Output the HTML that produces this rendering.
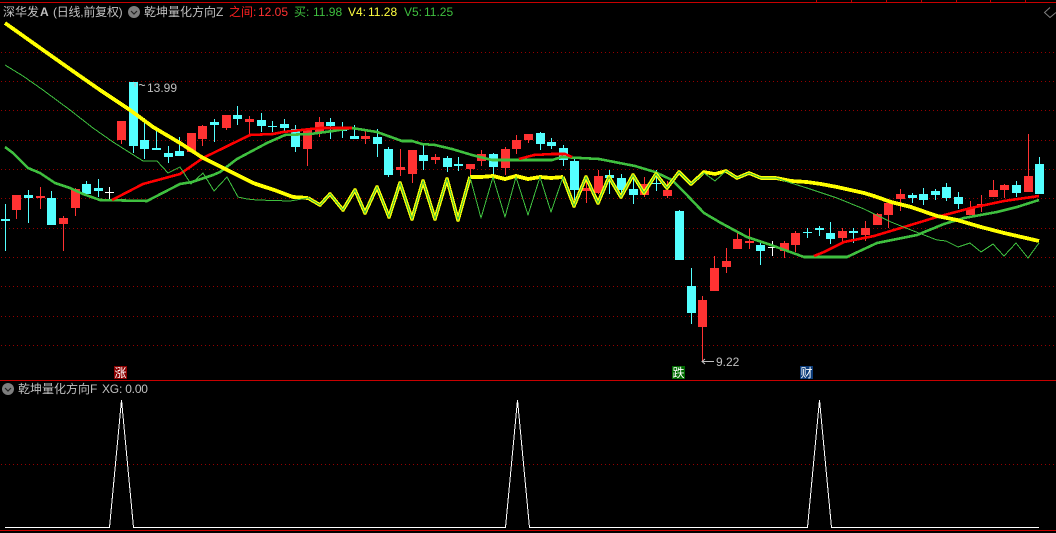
<!DOCTYPE html>
<html lang="zh"><head><meta charset="utf-8"><title>K线</title>
<style>
html,body{margin:0;padding:0;background:#000;width:1056px;height:533px;overflow:hidden}
#c{position:relative;width:1056px;height:533px;background:#000;overflow:hidden}
svg{position:absolute;left:0;top:0}
.t{position:absolute;white-space:pre;font:12px/14px "Liberation Sans","WenQuanYi Zen Hei","Noto Sans CJK SC",sans-serif;color:#c0c0c0}
.f{position:absolute;width:13px;height:13px;color:#fff;text-align:center;font:12px/13px "WenQuanYi Zen Hei","Noto Sans CJK SC",sans-serif}
</style></head><body><div id="c">
<svg width="1056" height="533" viewBox="0 0 1056 533">
<defs><pattern id="d" x="1" y="0" width="4" height="1" patternUnits="userSpaceOnUse"><rect width="1" height="1" fill="#960000"/></pattern></defs>
<g shape-rendering="crispEdges">
<g fill="url(#d)">
<rect x="0" y="52" width="1056" height="1"/><rect x="0" y="81" width="1056" height="1"/><rect x="0" y="110" width="1056" height="1"/><rect x="0" y="140" width="1056" height="1"/><rect x="0" y="169" width="1056" height="1"/><rect x="0" y="198" width="1056" height="1"/><rect x="0" y="228" width="1056" height="1"/><rect x="0" y="257" width="1056" height="1"/><rect x="0" y="286" width="1056" height="1"/><rect x="0" y="316" width="1056" height="1"/><rect x="0" y="345" width="1056" height="1"/><rect x="0" y="464" width="1056" height="1"/>
</g>
<path d="M0 2.5H1056M0 380.5H1056M0 530.5H1056" stroke="#c80000" stroke-width="1" fill="none"/>
<path d="M816.5 0V2M851.5 0V2M886.5 0V2M921.5 0V2M956.5 0V2M990.5 0V2M1025.5 0V2" stroke="#c00000" stroke-width="1" fill="none"/>
<!-- red candles -->
<path stroke="#ff3232" fill="none" d="M16.5 195V219M40.5 187V209M63.5 216V251M75.5 188V216M121.5 121V144M191.5 133V152M202.5 125V146M226.5 115V130M249.5 116V135M307.5 130V166M319.5 117V137M365.5 131V144M400.5 149V176M412.5 150V183M435.5 154V164M470.5 164V177M481.5 150V166M505.5 147V175M516.5 135V154M528.5 134V143M586.5 177V203M598.5 170V194M644.5 177V197M667.5 181V198M702.5 296V361M714.5 256V291M726.5 248V273M737.5 231V249M749.5 228V249M784.5 241V258M795.5 231V252M842.5 228V243M865.5 221V241M877.5 213V225M888.5 202V228M900.5 189V211M970.5 201V215M981.5 195V212M993.5 180V197M1004.5 184V198M1028.5 134V192"/>
<path fill="#ff3232" d="M12 195h9v15h-9zM36 196h9v2h-9zM59 218h9v6h-9zM71 189h9v19h-9zM117 121h9v19h-9zM187 133h9v19h-9zM198 126h9v13h-9zM222 115h9v13h-9zM245 119h9v3h-9zM303 130h9v19h-9zM315 122h9v10h-9zM361 136h9v3h-9zM396 167h9v3h-9zM408 150h9v24h-9zM431 157h9v3h-9zM466 164h9v5h-9zM477 154h9v7h-9zM501 149h9v19h-9zM512 140h9v9h-9zM524 134h9v6h-9zM582 188h9v3h-9zM594 176h9v17h-9zM640 184h9v11h-9zM663 190h9v6h-9zM698 300h9v27h-9zM710 268h9v23h-9zM722 261h9v6h-9zM733 239h9v10h-9zM745 241h9v2h-9zM780 243h9v8h-9zM791 233h9v12h-9zM838 231h9v7h-9zM861 228h9v7h-9zM873 214h9v11h-9zM884 203h9v12h-9zM896 194h9v5h-9zM966 208h9v7h-9zM977 204h9v2h-9zM989 190h9v7h-9zM1000 185h9v5h-9zM1024 176h9v16h-9z"/>
<!-- cyan candles -->
<path stroke="#54ffff" fill="none" d="M5.5 204V251M28.5 190V223M51.5 191V225M86.5 181V194M98.5 179V197M133.5 82V153M144.5 118V159M156.5 131V150M168.5 146V163M179.5 137V156M214.5 119V142M237.5 106V125M261.5 113V132M272.5 121V132M284.5 119V131M295.5 125V152M330.5 118V139M342.5 122V138M354.5 125V139M377.5 129V157M388.5 147V177M423.5 145V170M447.5 156V172M458.5 157V171M493.5 153V177M540.5 132V150M551.5 138V149M563.5 145V166M574.5 159V200M609.5 170V194M621.5 174V198M633.5 174V204M656.5 170V191M679.5 210V260M691.5 268V324M760.5 240V265M807.5 228V238M819.5 226V236M830.5 222V244M853.5 228V243M912.5 193V203M923.5 188V205M935.5 189V200M946.5 183V201M958.5 192V209M1016.5 181V197M1039.5 157V194"/>
<path fill="#54ffff" d="M1 219h9v2h-9zM24 195h9v3h-9zM47 198h9v27h-9zM82 184h9v10h-9zM94 188h9v3h-9zM129 82h9v64h-9zM140 140h9v9h-9zM152 148h9v2h-9zM164 153h9v4h-9zM175 151h9v5h-9zM210 122h9v3h-9zM233 115h9v4h-9zM257 120h9v6h-9zM268 126h9v1h-9zM280 124h9v4h-9zM291 129h9v18h-9zM326 122h9v4h-9zM338 129h9v2h-9zM350 136h9v3h-9zM373 137h9v7h-9zM384 149h9v26h-9zM419 155h9v6h-9zM443 158h9v9h-9zM454 164h9v2h-9zM489 154h9v13h-9zM536 133h9v11h-9zM547 142h9v4h-9zM559 148h9v12h-9zM570 161h9v29h-9zM605 175h9v3h-9zM617 178h9v12h-9zM629 189h9v6h-9zM652 183h9v1h-9zM675 211h9v49h-9zM687 286h9v27h-9zM756 245h9v6h-9zM803 232h9v1h-9zM815 228h9v2h-9zM826 233h9v6h-9zM849 231h9v2h-9zM908 195h9v3h-9zM919 194h9v6h-9zM931 191h9v4h-9zM942 187h9v11h-9zM954 197h9v7h-9zM1012 185h9v8h-9zM1035 164h9v30h-9z"/>
<!-- white candles -->
<path stroke="#fff" fill="none" d="M109.5 187V200M772.5 241V256"/>
<path fill="#fff" d="M105 192h9v1h-9zM768 247h9v1h-9z"/>
</g>
<g fill="none" stroke-linejoin="round" shape-rendering="crispEdges">
<!-- thick green -->
<polyline stroke="#3fbf3f" stroke-width="2.6" points="5,147 13,153 28,168 40,173 55,183 70,188 83,194 100,200 147,201 180,184 192,182 213,175 220,172 237,159 267,143 285,135 310,134 333,131 352,128 377,132 402,141 412,141 422,144 435,145 452,149 472,155 492,160 552,160 562,157 599,159 635,166 655,172 672,180 685,193 704,213 721,223 747,237 771,245 804,257 847,257 877,243 917,235 944,224 964,218 997,212 1017,207 1039,200"/>
<!-- red MA -->
<polyline stroke="#ff0000" stroke-width="2.6" points="112,200 143,184 180,174 203,158 250,135 273,134 283,132 320,128 352,128"/>
<polyline stroke="#ff0000" stroke-width="2.6" points="519,159 534,155 552,154 565,154 572,157"/>
<polyline stroke="#ff0000" stroke-width="2.6" points="814,256 824,252 844,242 874,236 904,227 937,217 971,208 1004,201 1039,196"/>
<!-- yellow -->
<polyline stroke="#ffff00" stroke-width="3.8" points="5,23 43,50 77,74 100,90 130,110 153,127 180,143 203,158 227,170 253,183 277,191 293,197 308,198"/>
<polyline stroke="#ffff00" stroke-width="3.6" points="308,198 320,205 330,194 343,210 355,190 365,213 377,187 389,217 400,183 412,219 423,181 435,219 447,179 458,220 470,177"/>
<polyline stroke="#ffff00" stroke-width="3.8" points="470,177 481,177 493,176 505,179 516,176 528,179 540,177 551,178 563,177"/>
<polyline stroke="#ffff00" stroke-width="3.6" points="563,177 574,206 586,177 598,203 609,177 621,197 633,175 644,193 656,174 667,188 679,172 691,184 704,172 715,174 726,171 737,178 749,173 761,178 776,178"/>
<polyline stroke="#ffff00" stroke-width="3.8" points="776,178 791,181 807,182 821,184 837,187 864,193 874,196 891,202 911,207 937,216 957,220 981,227 1004,233 1039,241"/>
<!-- thin green -->
<polyline stroke="#3fbf3f" stroke-width="1" points="5,65 23,76 43,90 70,110 93,128 113,142 143,161 157,161 168,173 180,167 191,184 203,173 214,191 227,177 238,197 247,199 257,200 290,201 308,198 320,205 330,194 343,210 355,190 365,213 377,187 389,217 400,183 412,219 423,181 435,219 447,179 458,220 470,177 481,218 493,177 505,217 516,177 528,215 540,177 551,212 563,177 574,206 586,177 598,203 609,177 621,197 633,175 644,193 656,174 667,188 679,172 691,184 704,173 715,181 726,171 737,178 749,173 761,178 776,178 791,183 807,188 837,198 864,209 891,222 911,230 937,240 946,241 958,247 970,243 981,252 993,244 1004,256 1016,243 1028,258 1039,243"/>
</g>
<!-- sub chart -->
<path fill="none" stroke="#fff" stroke-width="1" shape-rendering="crispEdges" d="M5 527.5H109.5L121.5 400L133.5 527.5H505.5L517.5 400L529.5 527.5H807.5L819.5 400L831.5 527.5H1039"/>
<!-- circle icons -->
<circle cx="134" cy="12" r="6" fill="#7e7e7e"/><path d="M131 11l3 3 3-3" stroke="#222" stroke-width="1.2" fill="none"/>
<circle cx="8" cy="389" r="6" fill="#7e7e7e"/><path d="M5 388l3 3 3-3" stroke="#222" stroke-width="1.2" fill="none"/>
<!-- diamond -->
<path d="M1050 7.5L1044.5 12.5L1050 17.5L1056 12.5" fill="none" stroke="#808080" stroke-width="1"/>
<!-- markers -->
<path d="M134 84h2M135 83v4M139 85q2-1 3 0t3 0" stroke="#c0c0c0" stroke-width="1" fill="none"/>
<path d="M702 361.5H714M705 359l-3 2.5 3 2.5" stroke="#c0c0c0" stroke-width="1" fill="none"/>
</svg>
<span class="t" style="left:3px;top:5px">深华发</span>
<span class="t" style="left:40px;top:5px;font-weight:bold">A</span>
<span class="t" style="left:53px;top:5px;letter-spacing:-.25px">(日线,前复权)</span>
<span class="t" style="left:144px;top:5px">乾坤量化方向Z</span>
<span class="t" style="left:229px;top:5px;color:#ff2020">之间:</span>
<span class="t" style="left:258px;top:5px;color:#ff3232">12.05</span>
<span class="t" style="left:294px;top:5px;color:#3fbf3f">买:</span>
<span class="t" style="left:313px;top:5px;color:#3fbf3f">11.98</span>
<span class="t" style="left:348px;top:5px;color:#ffff40">V4:</span>
<span class="t" style="left:368px;top:5px;color:#ffff40">11.28</span>
<span class="t" style="left:404px;top:5px;color:#3fbf3f">V5:</span>
<span class="t" style="left:424px;top:5px;color:#3fbf3f">11.25</span>
<span class="t" style="left:147px;top:81px">13.99</span>
<span class="t" style="left:716px;top:355px">9.22</span>
<span class="t" style="left:18px;top:382px">乾坤量化方向F</span>
<span class="t" style="left:102px;top:382px;letter-spacing:-.2px">XG: 0.00</span>
<div class="f" style="left:114px;top:366px;background:#8a0000">涨</div>
<div class="f" style="left:672px;top:366px;background:#006a00">跌</div>
<div class="f" style="left:800px;top:366px;background:#0a3a78">财</div>
</div></body></html>
